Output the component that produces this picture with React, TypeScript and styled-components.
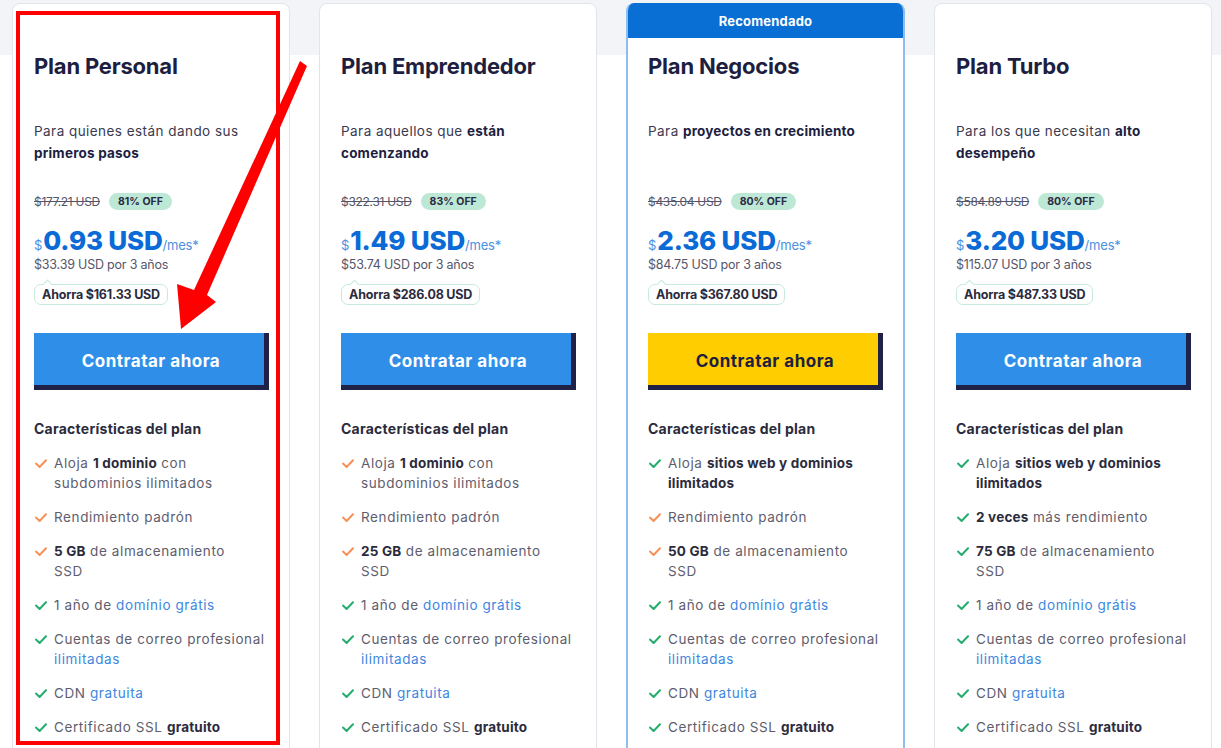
import React from 'react';
import styled, { createGlobalStyle } from 'styled-components';

const GlobalStyle = createGlobalStyle`
  html, body {
    margin: 0;
    padding: 0;
    background: #fff;
    font-family: Inter, 'Noto Sans', Arial, sans-serif;
    overflow: hidden;
  }
  * { box-sizing: border-box; }
`;

const Page = styled.main`
  position: relative;
  width: 1221px;
  height: 748px;
  overflow: hidden;
  background: linear-gradient(to bottom, #f3f4f7 0, #f3f4f7 55px, #fff 55px);
  padding: 3px 0 0 12px;
  display: flex;
  gap: 29px;
  align-items: flex-start;
`;

interface CardProps {
  featured?: boolean;
}
const Card = styled.article<CardProps>`
  flex: 0 0 ${({ featured }) => featured ? '279px' : '278px'};
  height: 800px;
  background: #fff;
  border: ${({ featured }) => featured ? '2px solid #8ebdf0' : '1px solid #e1e5eb'};
  border-top-width: ${({ featured }) => featured ? '0' : '1px'};
  border-radius: 8px;
  overflow: hidden;
  display: flex;
  flex-direction: column;
`;

const Ribbon = styled.div<CardProps>`
  height: 35px;
  margin: ${({ featured }) => featured ? '0 -2px' : '0'};
  background: ${({ featured }) => featured ? '#0a6fd4' : 'transparent'};
  color: #fff;
  font-size: 13px;
  font-weight: 700;
  letter-spacing: 0.2px;
  display: flex;
  align-items: center;
  justify-content: center;
`;

const Body = styled.div<CardProps>`
  padding: ${({ featured }) => featured ? '14px 20px 0' : '13px 21px 0'};
  display: flex;
  flex-direction: column;
`;

const Title = styled.h2`
  margin: 0;
  font-size: 22px;
  line-height: 28px;
  font-weight: 700;
  color: #1d1e40;
  letter-spacing: -0.2px;
`;

const Description = styled.p`
  margin: 40px 0 0;
  height: 44px;
  font-size: 13.5px;
  line-height: 22px;
  color: #3b3a50;
  letter-spacing: 0.45px;
  b { color: #1d1e40; font-weight: 700; letter-spacing: 0.2px; }
`;

const OldPriceRow = styled.div`
  margin-top: 28px;
  height: 18px;
  display: flex;
  align-items: center;
  gap: 9px;
`;

const OldPrice = styled.s`
  font-size: 12px;
  color: #55556a;
  letter-spacing: -0.3px;
`;

const Discount = styled.span`
  background: #bde8d5;
  color: #2b2b44;
  font-size: 10.5px;
  font-weight: 700;
  height: 17px;
  line-height: 17px;
  padding: 0 9px;
  border-radius: 10px;
`;

const PriceRow = styled.div`
  margin-top: 15px;
  height: 29px;
  display: flex;
  align-items: baseline;
  color: #0a6ad6;
`;

const Currency = styled.span`
  font-size: 13px;
  font-weight: 400;
  color: #4d8fe0;
  margin-right: 1px;
`;

const Amount = styled.span`
  font-size: 26px;
  font-weight: 800;
  letter-spacing: -0.2px;
`;

const Period = styled.span`
  font-size: 13px;
  color: #4d8fe0;
  letter-spacing: -0.2px;
`;

const Total = styled.div`
  margin-top: 2px;
  font-size: 12.5px;
  line-height: 18px;
  color: #55556a;
  letter-spacing: -0.2px;
`;

const Savings = styled.div`
  position: relative;
  margin-top: 10px;
  align-self: flex-start;
  height: 21px;
  line-height: 19px;
  padding: 0 7px;
  border: 1px solid #c6eadb;
  border-radius: 7px;
  font-size: 12.5px;
  font-weight: 700;
  color: #2b2b3d;
  letter-spacing: -0.2px;
  &::before {
    content: '';
    position: absolute;
    left: 9px;
    top: -4px;
    width: 6px;
    height: 6px;
    background: #fff;
    border-left: 1px solid #c6eadb;
    border-top: 1px solid #c6eadb;
    transform: rotate(45deg);
  }
`;

interface ButtonProps {
  variant: 'blue' | 'yellow';
}
const Button = styled.button<ButtonProps>`
  margin-top: 28px;
  width: 235px;
  height: 57px;
  border: none;
  border-right: 5px solid #1f2147;
  border-bottom: 5px solid #1f2147;
  border-radius: 0;
  background: ${({ variant }) => variant === 'yellow' ? '#ffcd00' : '#2f8fe8'};
  color: ${({ variant }) => variant === 'yellow' ? '#1d1e40' : '#fff'};
  font-family: inherit;
  font-size: 17px;
  font-weight: 700;
  letter-spacing: 0.5px;
  padding: 4px 0 0 4px;
  cursor: pointer;
`;

const FeaturesTitle = styled.h3`
  margin: 29px 0 0;
  font-size: 14px;
  line-height: 20px;
  font-weight: 700;
  color: #2b2b3d;
  letter-spacing: 0.25px;
`;

const FeatureList = styled.ul`
  list-style: none;
  margin: 14px 0 0;
  padding: 0;
  display: flex;
  flex-direction: column;
  gap: 14px;
`;

const FeatureItem = styled.li`
  display: flex;
  align-items: flex-start;
  gap: 7px;
  font-size: 13.5px;
  line-height: 20px;
  color: #5e5d6e;
  letter-spacing: 0.6px;
  b { color: #2b2b3d; font-weight: 700; letter-spacing: 0.2px; }
  a { color: #3d87de; text-decoration: none; }
`;

const CheckWrap = styled.span`
  flex: 0 0 12px;
  height: 20px;
  display: flex;
  align-items: center;
  margin-left: 1px;
`;

const Overlay = styled.svg`
  position: absolute;
  left: 0;
  top: 0;
  pointer-events: none;
`;

const Check = ({ color }: { color: string }) => (
  <CheckWrap>
    <svg width="12" height="9" viewBox="0 0 12 9">
      <path d="M1 4.6l3.6 3.4L11 1.2" fill="none" stroke={color} strokeWidth="2" strokeLinecap="round" strokeLinejoin="round" />
    </svg>
  </CheckWrap>
);

const ORANGE = '#f6915a';
const GREEN = '#25ad6e';

interface Feature {
  ok: boolean;
  content: React.ReactNode;
}

interface Plan {
  name: string;
  description: React.ReactNode;
  oldPrice: string;
  off: string;
  price: string;
  total: string;
  savings: string;
  featured?: boolean;
  features: Feature[];
}

const commonFeatures: Feature[] = [
  { ok: true, content: <>1 año de <a href="#">domínio grátis</a></> },
  { ok: true, content: <>Cuentas de correo profesional <a href="#">ilimitadas</a></> },
  { ok: true, content: <>CDN <a href="#">gratuita</a></> },
  { ok: true, content: <>Certificado SSL <b>gratuito</b></> },
];

const storage = (gb: string) => <><b>{gb} GB</b> de almacenamiento<br />SSD</>;

const plans: Plan[] = [{
  name: 'Plan Personal',
  description: <>Para quienes están dando sus <b>primeros pasos</b></>,
  oldPrice: '$177.21 USD',
  off: '81% OFF',
  price: '0.93 USD',
  total: '$33.39 USD por 3 años',
  savings: 'Ahorra $161.33 USD',
  features: [
    { ok: false, content: <>Aloja <b>1 dominio</b> con subdominios ilimitados</> },
    { ok: false, content: <>Rendimiento padrón</> },
    { ok: false, content: storage('5') },
    ...commonFeatures
  ]
}, {
  name: 'Plan Emprendedor',
  description: <>Para aquellos que <b>están comenzando</b></>,
  oldPrice: '$322.31 USD',
  off: '83% OFF',
  price: '1.49 USD',
  total: '$53.74 USD por 3 años',
  savings: 'Ahorra $286.08 USD',
  features: [
    { ok: false, content: <>Aloja <b>1 dominio</b> con subdominios ilimitados</> },
    { ok: false, content: <>Rendimiento padrón</> },
    { ok: false, content: storage('25') },
    ...commonFeatures
  ]
}, {
  name: 'Plan Negocios',
  description: <>Para <b>proyectos en crecimiento</b></>,
  oldPrice: '$435.04 USD',
  off: '80% OFF',
  price: '2.36 USD',
  total: '$84.75 USD por 3 años',
  savings: 'Ahorra $367.80 USD',
  featured: true,
  features: [
    { ok: true, content: <>Aloja <b>sitios web y dominios ilimitados</b></> },
    { ok: false, content: <>Rendimiento padrón</> },
    { ok: false, content: storage('50') },
    ...commonFeatures
  ]
}, {
  name: 'Plan Turbo',
  description: <>Para los que necesitan <b>alto desempeño</b></>,
  oldPrice: '$584.89 USD',
  off: '80% OFF',
  price: '3.20 USD',
  total: '$115.07 USD por 3 años',
  savings: 'Ahorra $487.33 USD',
  features: [
    { ok: true, content: <>Aloja <b>sitios web y dominios ilimitados</b></> },
    { ok: true, content: <><b>2 veces</b> más rendimiento</> },
    { ok: true, content: storage('75') },
    ...commonFeatures
  ]
}];

export default function App() {
  const cardEls = plans.map((plan, i) => (
    <Card key={i} featured={plan.featured}>
      <Ribbon featured={plan.featured}>{plan.featured ? 'Recomendado' : null}</Ribbon>
      <Body featured={plan.featured}>
        <Title>{plan.name}</Title>
        <Description>{plan.description}</Description>
        <OldPriceRow>
          <OldPrice>{plan.oldPrice}</OldPrice>
          <Discount>{plan.off}</Discount>
        </OldPriceRow>
        <PriceRow>
          <Currency>$</Currency>
          <Amount>{plan.price}</Amount>
          <Period>/mes*</Period>
        </PriceRow>
        <Total>{plan.total}</Total>
        <Savings>{plan.savings}</Savings>
        <Button variant={plan.featured ? 'yellow' : 'blue'}>Contratar ahora</Button>
        <FeaturesTitle>Características del plan</FeaturesTitle>
        <FeatureList>
          {plan.features.map((f, j) => (
            <FeatureItem key={j}>
              <Check color={f.ok ? GREEN : ORANGE} />
              <span>{f.content}</span>
            </FeatureItem>
          ))}
        </FeatureList>
      </Body>
    </Card>
  ));

  return (
    <>
      <GlobalStyle />
      <Page>
        {cardEls}
        {/* red annotation drawn on top of the screenshot */}
        <Overlay width="1221" height="748" viewBox="0 0 1221 748">
          <rect x="18" y="13" width="260" height="730" fill="none" stroke="#ff0000" strokeWidth="4" />
          <polygon
            points="300,61 307,66 207,295 216,302 181,329 177,284 194,290"
            fill="#ff0000"
          />
        </Overlay>
      </Page>
    </>
  );
}
